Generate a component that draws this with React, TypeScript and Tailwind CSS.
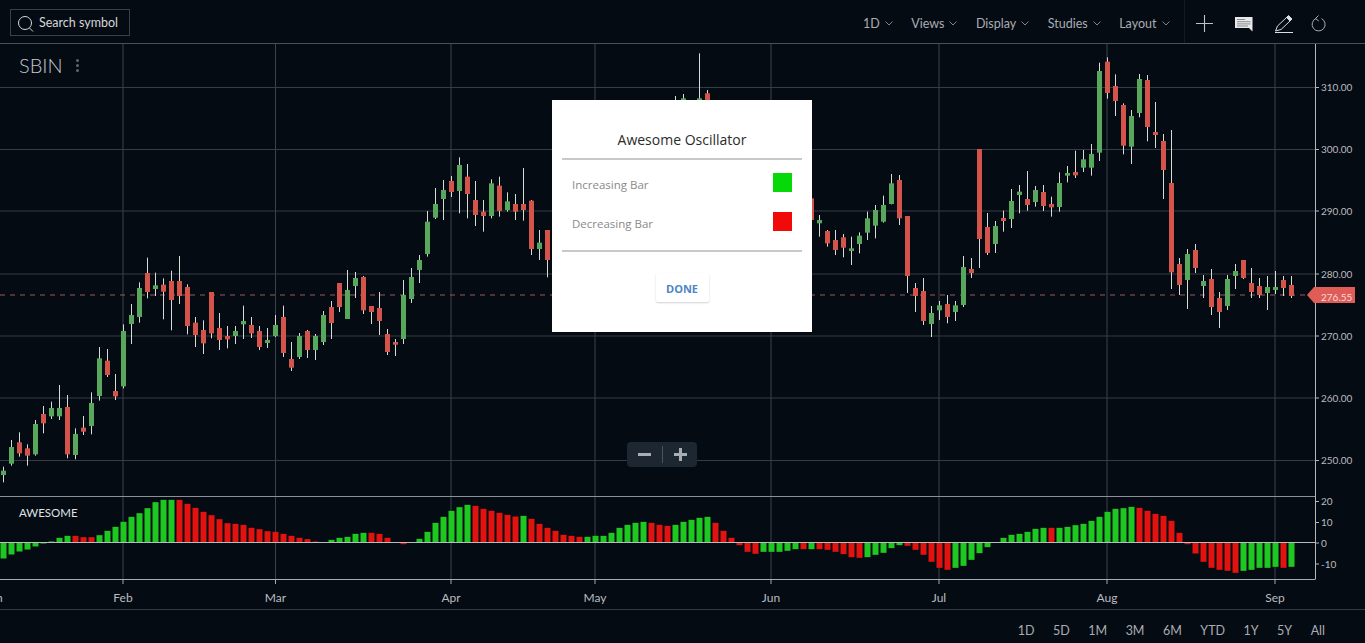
// [index, wick top, wick bottom, body top, body bottom, up?]  y values are 3 * (pageY - 215)
const candles: Array<[number, number, number, number, number, number]> = [
  [0, 755, 802, 767, 780, 1], [1, 675, 752, 696, 746, 1], [2, 652, 725, 682, 715, 0], [3, 688, 752, 700, 722, 0],
  [4, 615, 722, 627, 718, 1], [5, 573, 655, 597, 625, 0], [6, 560, 612, 579, 604, 1], [7, 510, 615, 579, 604, 1],
  [8, 540, 730, 576, 718, 0], [9, 640, 733, 657, 720, 1], [10, 603, 660, 638, 650, 0], [11, 532, 658, 564, 633, 1],
  [12, 396, 557, 430, 543, 1], [13, 402, 486, 437, 480, 0], [14, 477, 555, 528, 544, 0], [15, 328, 520, 348, 514, 1],
  [16, 267, 387, 300, 327, 1], [17, 202, 323, 219, 306, 1], [18, 128, 250, 174, 231, 0], [19, 173, 243, 211, 222, 1],
  [20, 190, 313, 209, 230, 0], [21, 167, 346, 198, 255, 0], [22, 123, 267, 198, 243, 0], [23, 208, 358, 216, 333, 0],
  [24, 306, 396, 323, 360, 0], [25, 316, 417, 345, 385, 0], [26, 231, 370, 231, 355, 0], [27, 294, 405, 339, 375, 0],
  [28, 333, 400, 363, 373, 0], [29, 333, 387, 348, 363, 1], [30, 272, 372, 318, 328, 1], [31, 306, 369, 330, 355, 0],
  [32, 333, 405, 348, 396, 0], [33, 339, 399, 375, 384, 1], [34, 300, 366, 330, 363, 1], [35, 272, 426, 306, 414, 0],
  [36, 381, 468, 432, 458, 0], [37, 354, 432, 363, 426, 1], [38, 345, 429, 348, 405, 0], [39, 357, 435, 363, 405, 1],
  [40, 288, 390, 300, 381, 1], [41, 258, 372, 276, 324, 0], [42, 204, 291, 204, 276, 0], [43, 165, 312, 225, 312, 1],
  [44, 171, 249, 189, 213, 1], [45, 183, 297, 186, 286, 0], [46, 273, 327, 273, 291, 0], [47, 231, 360, 279, 318, 0],
  [48, 342, 420, 357, 411, 0], [49, 372, 423, 381, 389, 0], [50, 195, 387, 240, 372, 1], [51, 159, 264, 186, 252, 1],
  [52, 120, 204, 135, 165, 1], [53, -12, 125, 20, 117, 1], [54, -81, 12, -33, 8, 1], [55, -105, 15, -75, -48, 1],
  [56, -117, -54, -102, -69, 0], [57, -173, -5, -150, -72, 1], [58, -153, 10, -115, -63, 0], [59, -102, 33, -45, 0, 0],
  [60, -45, 50, -10, 3, 0], [61, -107, 10, -95, 3, 1], [62, -115, 5, -88, -12, 0], [63, -68, -10, -41, -15, 1],
  [64, -63, 15, -33, -10, 0], [65, -141, 17, -33, -15, 0], [66, -45, 120, -43, 102, 0], [67, 45, 135, 83, 102, 1],
  [68, 45, 187, 45, 135, 0], [84, -357, -330, -340, -335, 1], [85, -363, -330, -350, -335, 1],
  [87, -485, -330, -350, -335, 1], [88, -375, -330, -365, -335, 0],
  [101, -60, 25, -50, 15, 0], [102, 0, 65, 15, 25, 1], [103, 45, 95, 48, 85, 0], [104, 45, 120, 75, 105, 0],
  [105, 57, 127, 67, 98, 0], [106, 65, 150, 100, 108, 1], [107, 52, 115, 62, 87, 1], [108, -10, 75, 10, 53, 1],
  [109, -30, 70, -15, 32, 1], [110, -58, 23, -30, 20, 1], [111, -123, -32, -95, -33, 1], [112, -120, 30, -105, 10, 0],
  [113, 3, 234, 3, 183, 0], [114, 204, 291, 219, 243, 0], [115, 189, 330, 228, 318, 0], [116, 273, 366, 294, 327, 1],
  [117, 258, 315, 271, 286, 1], [118, 240, 325, 267, 306, 0], [119, 258, 318, 271, 291, 1], [120, 123, 276, 156, 270, 1],
  [121, 129, 189, 162, 174, 0], [122, -198, 159, -198, 72, 0], [123, -6, 120, 36, 114, 0], [124, 18, 114, 33, 87, 1],
  [125, -13, 50, 9, 18, 0], [126, -78, 39, -42, 12, 1], [127, -90, -5, -70, -60, 1], [128, -132, -13, -48, -30, 0],
  [129, -87, -25, -75, -39, 1], [130, -90, -12, -69, -27, 0], [131, -55, 5, -33, -23, 0], [132, -128, -10, -96, -24, 1],
  [133, -147, -98, -126, -118, 1], [134, -193, -111, -129, -119, 0], [135, -195, -129, -167, -142, 1],
  [136, -213, -118, -183, -142, 1], [137, -457, -162, -432, -187, 1], [138, -473, -349, -460, -366, 0],
  [139, -422, -297, -387, -342, 0], [140, -335, -182, -330, -208, 0], [141, -315, -153, -297, -205, 1],
  [142, -423, -293, -408, -306, 1], [143, -420, -221, -405, -264, 0], [144, -339, -201, -249, -240, 0],
  [145, -243, -48, -222, -135, 0], [146, -255, 222, -96, 172, 0], [147, 129, 240, 147, 210, 0], [148, 102, 282, 117, 195, 1],
  [149, 87, 174, 105, 159, 0], [150, 180, 249, 198, 213, 1], [151, 162, 300, 192, 276, 0], [152, 231, 339, 249, 291, 0],
  [153, 180, 285, 192, 273, 1], [154, 147, 222, 168, 183, 1], [155, 135, 192, 135, 189, 0], [156, 159, 249, 204, 231, 0],
  [157, 189, 249, 213, 240, 0], [158, 183, 285, 216, 234, 1], [159, 168, 237, 216, 225, 1], [160, 183, 243, 195, 219, 0],
  [161, 183, 249, 210, 243, 0],
];

// oscillator heights (3x px, + above zero)
const aoValues = [
  -48, -36, -27, -21, -12, -3, 3, 14, 20, 20, 16, 16, 22, 35, 47, 62, 77, 88, 103, 121, 128, 128, 128, 116, 104, 92, 82, 70, 58, 56, 53, 44, 40, 34, 32, 26, 20, 14, 10, 3, 1,
  8, 14, 17, 26, 29, 29, 26, 14, 1, -5, 1, 11, 32, 59, 77, 95, 106, 113, 110, 101, 95, 89, 83, 78, 80, 71, 56, 44, 35, 23, 20, 17, 17, 20, 20, 29, 44, 53, 59, 62, 59, 53, 50,
  53, 62, 68, 74, 77, 59, 35, 14, -8, -28, -34, -28, -28, -28, -25, -20, -20, -20, -20, -22, -28, -35, -44, -46, -44, -37, -31, -17, -8, -10, -22, -37, -58, -76, -82, -76, -70,
  -52, -32, -14, 0, 14, 23, 26, 32, 41, 44, 44, 44, 47, 52, 56, 65, 77, 92, 101, 103, 107, 104, 95, 86, 80, 65, 29, -5, -33, -58, -76, -82, -85, -91, -85, -82, -76, -76, -73, -76, -73,
];

const redRanges: Array<[number, number]> = [
  [9, 11], [22, 40], [46, 50], [59, 64], [66, 72], [81, 83], [89, 94], [100, 100], [102, 107], [113, 118], [131, 131], [142, 154], [160, 160],
];
const isRed = (i: number) => redRanges.some(([a, b]) => i >= a && i <= b);

const priceTicks: Array<[number, string]> = [
  [87.5, "310.00"], [149.5, "300.00"], [211, "290.00"], [274, "280.00"], [336, "270.00"], [398, "260.00"], [460.5, "250.00"],
];
const aoTicks: Array<[number, string]> = [[501.5, "20"], [522.5, "10"], [543, "0"], [564, "-10"]];
const months: Array<[number, string]> = [
  [123, "Feb"], [275.5, "Mar"], [451, "Apr"], [595, "May"], [771, "Jun"], [939, "Jul"], [1107, "Aug"], [1275, "Sep"],
];
const menus = ["1D", "Views", "Display", "Studies", "Layout"];
const ranges = ["1D", "5D", "1M", "3M", "6M", "YTD", "1Y", "5Y", "All"];

const toY = (v: number) => 215 + v / 3;
const cx = (i: number) => 3.5 + 8 * i;

function Chart() {
  return (
    <svg width={1365} height={565} viewBox="0 44 1365 565" className="block" fontFamily="Lato, sans-serif">
      {months.map(([x]) => (
        <line key={x} x1={x} x2={x} y1={44} y2={579} stroke="#3d434b" />
      ))}
      {priceTicks.map(([y]) => (
        <line key={y} x1={0} x2={1315} y1={y} y2={y} stroke="#363c44" />
      ))}
      <line x1={0} x2={1315} y1={295} y2={295} stroke="#a0595a" strokeDasharray="5 5" />

      {candles.map(([i, wt, wb, bt, bb, up]) => (
        <g key={i}>
          <line x1={cx(i)} x2={cx(i)} y1={toY(wt)} y2={toY(wb)} stroke="#d8dcd8" />
          <rect x={cx(i) - 2.5} y={toY(bt)} width={5} height={(bb - bt) / 3} fill={up ? "#57a85c" : "#d4544b"} />
        </g>
      ))}

      <line x1={0} x2={1315} y1={496.5} y2={496.5} stroke="#8d9197" />
      <line x1={0} x2={1315} y1={579.5} y2={579.5} stroke="#a9adb1" />
      {aoValues.map((v, i) => (
        <rect
          key={i}
          x={cx(i) - 3}
          y={v > 0 ? 542.5 - v / 3 : 542.5}
          width={6}
          height={Math.abs(v) / 3}
          fill={isRed(i) ? "#e2130f" : "#1fc721"}
        />
      ))}
      <line x1={0} x2={1315} y1={542.5} y2={542.5} stroke="#b9bdbd" />

      <line x1={1315.5} x2={1315.5} y1={44} y2={579.5} stroke="#b4b8bc" />
      {priceTicks.map(([y, label]) => (
        <g key={label}>
          <line x1={1315} x2={1319} y1={y} y2={y} stroke="#b4b8bc" />
          <text x={1321} y={y + 3.5} fontSize={10} fill="#b9bcc0">{label}</text>
        </g>
      ))}
      {aoTicks.map(([y, label]) => (
        <g key={label}>
          <line x1={1315} x2={1319} y1={y} y2={y} stroke="#b4b8bc" />
          <text x={1321} y={y + 3.5} fontSize={10} fill="#b9bcc0">{label}</text>
        </g>
      ))}
      {months.map(([x, label]) => (
        <g key={label}>
          <line x1={x} x2={x} y1={579} y2={584} stroke="#a9adb1" />
          <text x={x} y={602} fontSize={12} fill="#b9bcc0" textAnchor="middle">{label}</text>
        </g>
      ))}
      <text x={-6} y={602} fontSize={12} fill="#b9bcc0" textAnchor="middle">Jan</text>

      <path d="M1307 295 L1314 287 H1355 V303 H1314 Z" fill="#e05d57" />
      <text x={1321} y={300.5} fontSize={10} fill="#f5dcdc">276.55</text>
    </svg>
  );
}

export default function App() {
  return (
    <div className="relative flex h-[643px] w-full flex-col overflow-hidden bg-[#050b13] font-['Lato',sans-serif]">
      <header className="flex h-[44px] shrink-0 items-center justify-between border-b border-[#4c5056] pl-[10px] pr-[39px]">
        <div className="mt-[2px] flex h-[27px] w-[120px] items-center gap-[4px] border border-[#3b4047] pl-[6px] text-[12.5px] text-[#d6d8da]">
          <svg width="18" height="18" viewBox="0 0 18 18" fill="none" stroke="#d6d8da" strokeWidth="1" className="mt-[2px]">
            <circle cx="8" cy="8" r="6.5" />
            <path d="M12.5 13 L16 16.5" />
          </svg>
          <span className="pt-[2px]">Search symbol</span>
        </div>
        <div className="flex h-full items-stretch">
          <nav className="flex items-center gap-[18.5px] pr-[14.5px] pt-[6px] text-[12.5px] text-[#a9adb2]">
            {menus.map((m) => (
              <span key={m} className="flex items-center gap-[5px]">
                {m}
                <svg width="8" height="5" viewBox="0 0 8 5" fill="none" stroke="#8d9197" strokeWidth="0.9" className="mb-[3px]">
                  <path d="M0.5 0.5 L4 4 L7.5 0.5" />
                </svg>
              </span>
            ))}
          </nav>
          <div className="flex items-center gap-[22px] border-l border-[#16191f] pl-[11px] pt-[4px]">
            <svg width="17" height="17" viewBox="0 0 17 17" stroke="#bfc2c5" strokeWidth="1.1">
              <path d="M8.5 0 V17 M0 8.5 H17" />
            </svg>
            <svg width="18" height="16" viewBox="0 0 18 16">
              <path d="M0 1 H17.5 V15.5 L14 12 H0 Z" fill="#e8eaec" />
              <path d="M2 3.5 H10 M2 5.7 H15.5 M2 7.9 H15.5 M2 10 H13" stroke="#70757a" strokeWidth="0.8" />
            </svg>
            <svg width="18" height="18" viewBox="0 0 18 18" fill="none" stroke="#dcdee0" strokeWidth="1">
              <path d="M0.5 16 L2.5 11 L11.5 2.5 L15 6 L6 14.5 Z" />
              <path d="M11.5 2.5 L13.5 0.5 L17 4 L15 6 Z" fill="#dcdee0" />
              <path d="M0 17.5 H18" />
            </svg>
            <svg width="15" height="17" viewBox="0 0 15 17" fill="none" stroke="#a9adb2" strokeWidth="1" className="-ml-[4px]">
              <path d="M5.2 3.4 A6.5 6.5 0 1 0 10.5 3.6" />
              <path d="M7.5 0.5 L4.5 3.5 L7.8 6" />
            </svg>
          </div>
        </div>
      </header>

      <main className="relative h-[565px] shrink-0">
        <Chart />
        <div className="absolute left-[19px] top-[8px] flex items-center gap-[13px] text-[20px] font-light leading-[26px] text-[#c4c8cc]">
          SBIN
          <span className="flex flex-col gap-[2px]">
            <span className="h-[3px] w-[3px] rounded-full bg-[#62676e]" />
            <span className="h-[3px] w-[3px] rounded-full bg-[#62676e]" />
            <span className="h-[3px] w-[3px] rounded-full bg-[#62676e]" />
          </span>
        </div>
        <div className="absolute left-[19px] top-[460px] text-[11.5px] text-[#dfe1e3]">AWESOME</div>

        <div className="absolute left-[627px] top-[398px] flex h-[25px] w-[70px] items-center rounded-[4px] bg-[#1c2732]">
          <span className="flex w-[35px] justify-center">
            <span className="h-[3px] w-[13px] bg-[#a8aeb4]" />
          </span>
          <span className="h-[17px] w-px bg-[#4a545e]" />
          <span className="relative flex flex-1 items-center justify-center">
            <span className="h-[3px] w-[13px] bg-[#a8aeb4]" />
            <span className="absolute h-[13px] w-[3px] bg-[#a8aeb4]" />
          </span>
        </div>

        <div className="absolute left-[552px] top-[56px] flex h-[232px] w-[260px] flex-col bg-white px-[10px] font-['Open_Sans',sans-serif]">
          <h2 className="flex h-[60px] shrink-0 items-end justify-center border-b-2 border-[#c9c9c9] pb-[8px] text-[14px] leading-[20px] text-[#2b2b2b]">
            Awesome Oscillator
          </h2>
          <div className="mt-[3px] flex h-[39px] items-center justify-between px-[10px] text-[11.5px] text-[#8a8a8a]">
            <span className="pt-[5px]">Increasing Bar</span>
            <span className="h-[19px] w-[19px] bg-[#07d807]" />
          </div>
          <div className="flex h-[39px] items-center justify-between px-[10px] text-[11.5px] text-[#8a8a8a]">
            <span className="pt-[5px]">Decreasing Bar</span>
            <span className="h-[19px] w-[19px] bg-[#f00a0a]" />
          </div>
          <div className="mt-[9px] flex flex-1 items-start justify-center border-t-2 border-[#c9c9c9] pt-[21px]">
            <button type="button" className="h-[29px] w-[53px] rounded-[2px] bg-white pt-[3px] text-[11px] font-bold text-[#4d86c6] shadow-[0_1px_2px_rgba(0,0,0,0.18)]">
              DONE
            </button>
          </div>
        </div>
      </main>

      <footer className="flex min-h-0 flex-1 items-center justify-end gap-[18.5px] border-t border-[#34393f] pr-[40px] pt-[10px] text-[12.5px] text-[#a9adb2]">
        {ranges.map((r) => (
          <span key={r}>{r}</span>
        ))}
      </footer>
    </div>
  );
}
